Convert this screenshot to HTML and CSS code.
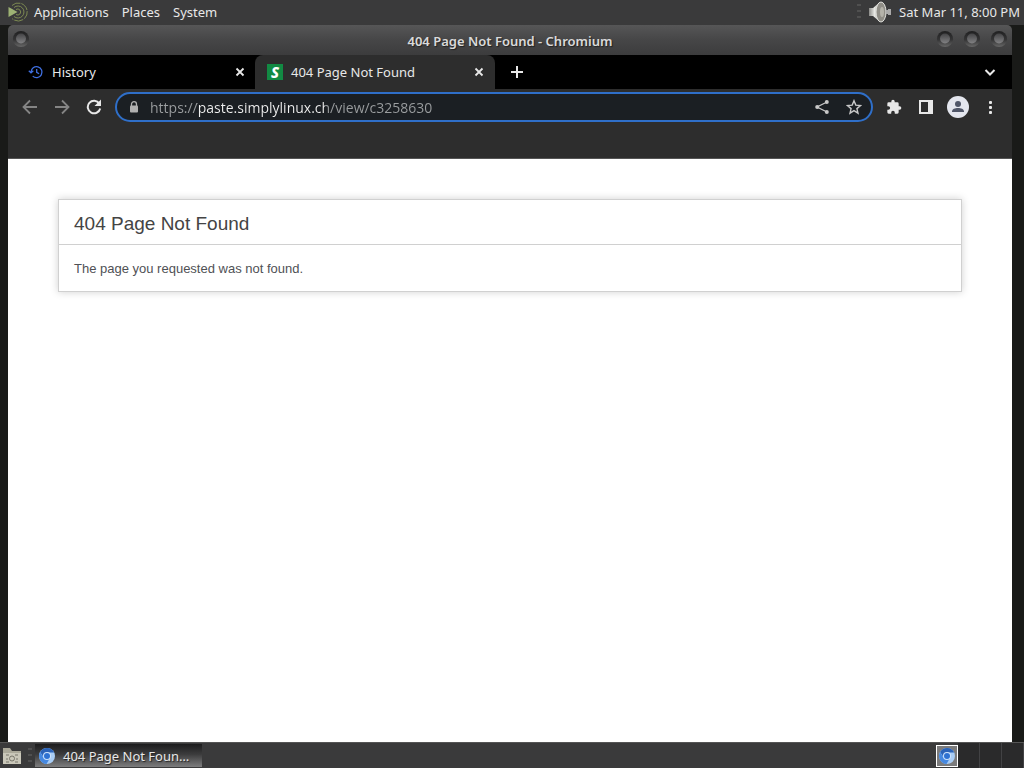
FILE: index.html
```html
<!DOCTYPE html>
<html lang="en">
<head>
    <meta charset="UTF-8">
    <meta name="viewport" content="width=device-width, initial-scale=1.0">
    <title>404 Page Not Found</title>
    <link rel="stylesheet" href="styles.css">
</head>
<body>
    <!-- shared icons -->
    <svg class="defs" width="0" height="0" aria-hidden="true">
        <symbol id="close" viewBox="0 0 10 10">
            <path d="M1.500 1.500l7 7M8.500 1.500l-7 7" fill="none" stroke="currentColor" stroke-width="1.800"/>
        </symbol>
        <symbol id="chromium" viewBox="0 0 18 18">
            <circle cx="9" cy="9" r="8" fill="#a9cdf5"/>
            <path d="M2.100 5A8 8 0 0 1 16.200 5.400H9L6 11z" fill="#2b63b8"/>
            <path d="M2.100 5A8 8 0 0 0 8.500 17l3.500-6-7-1z" fill="#4688e0"/>
            <circle cx="9" cy="9" r="4" fill="#cfe3fb"/>
            <circle cx="9" cy="9" r="3" fill="#2f72d2"/>
        </symbol>
        <symbol id="knob" viewBox="0 0 20 20">
            <circle cx="10" cy="10" r="9" fill="url(#rim)"/>
            <circle cx="10" cy="9.500" r="5.500" fill="url(#ball)"/>
        </symbol>
        <defs>
            <linearGradient id="rim" x1="0" y1="0" x2="0" y2="1">
                <stop offset="0" stop-color="#1f1f20"/>
                <stop offset=".55" stop-color="#353536"/>
                <stop offset="1" stop-color="#686868"/>
            </linearGradient>
            <linearGradient id="ball" x1="0" y1="0" x2="0" y2="1">
                <stop offset="0" stop-color="#444446"/>
                <stop offset="1" stop-color="#828284"/>
            </linearGradient>
            <linearGradient id="metal" x1="0" y1="0" x2="1" y2="0">
                <stop offset="0" stop-color="#8b8b88"/>
                <stop offset=".5" stop-color="#e8e8e4"/>
                <stop offset="1" stop-color="#9a9a96"/>
            </linearGradient>
        </defs>
    </svg>

    <header class="panel">
        <svg class="menu-logo" viewBox="0 0 20 20" aria-hidden="true">
            <g fill="none" stroke="#7d8a52" stroke-width="1">
                <path d="M4 3.500A9 9 0 1 1 4 16.500" stroke-dasharray="9 1"/>
                <path d="M6 5.500a6 6 0 1 1 0 9"/>
                <path d="M8 7.500a3 3 0 1 1 0 5"/>
            </g>
            <path d="M0.500 5v10l9-5z" fill="#9db274"/>
        </svg>
        <nav class="panel-menu">
            <button>Applications</button>
            <button>Places</button>
            <button>System</button>
        </nav>
        <div class="panel-tray">
            <span class="grip"></span>
            <svg class="volume" viewBox="0 0 24 22" aria-hidden="true">
                <path d="M1 7h4l7-6v20l-7-6H1z" fill="url(#metal)"/>
                <ellipse cx="13" cy="11" rx="5" ry="10" fill="#8f8d86" stroke="#e2e2de"/>
                <ellipse cx="14" cy="11" rx="2" ry="5" fill="#b5b3aa"/>
                <path d="M18 9h2v4h-2zM20 8h3v6h-3z" fill="#aaa"/>
            </svg>
            <time>Sat Mar 11, 8:00 PM</time>
        </div>
    </header>

    <main class="window">
        <div class="titlebar">
            <button class="knob" aria-label="Window menu"><svg><use href="#knob"/></svg></button>
            <span class="title">404 Page Not Found - Chromium</span>
            <div class="window-buttons">
                <button class="knob" aria-label="Minimize"><svg><use href="#knob"/></svg></button>
                <button class="knob" aria-label="Maximize"><svg><use href="#knob"/></svg></button>
                <button class="knob" aria-label="Close window"><svg><use href="#knob"/></svg></button>
            </div>
        </div>

        <div class="tabs">
            <div class="tab">
                <svg class="favicon" viewBox="0 0 16 16" fill="none" stroke="#3f6fe0" stroke-width="1.300" aria-hidden="true">
                    <path d="M3 8a5.500 5.500 0 1 1 1.700 4.100M0.800 6.800L3 8.900l2.300-2.100M8.700 5V8.300l2.400 1.500"/>
                </svg>
                <span>History</span>
                <button class="tab-close" aria-label="Close tab"><svg><use href="#close"/></svg></button>
            </div>
            <div class="tab active">
                <span class="favicon site">S</span>
                <span>404 Page Not Found</span>
                <button class="tab-close" aria-label="Close tab"><svg><use href="#close"/></svg></button>
            </div>
            <button class="new-tab" aria-label="New tab">
                <svg viewBox="0 0 12 12"><path d="M6 0v12M0 6h12" stroke="currentColor" stroke-width="2"/></svg>
            </button>
            <button class="tab-search" aria-label="Search tabs">
                <svg viewBox="0 0 12 12"><path d="M1.500 4L6 8.500 10.500 4" fill="none" stroke="currentColor" stroke-width="2"/></svg>
            </button>
        </div>

        <div class="toolbar">
            <button class="tool dim" aria-label="Back">
                <svg viewBox="0 0 16 16" fill="none" stroke="currentColor" stroke-width="1.800"><path d="M15 8H2M8 1.500L1.500 8 8 14.500"/></svg>
            </button>
            <button class="tool dim" aria-label="Forward">
                <svg viewBox="0 0 16 16" fill="none" stroke="currentColor" stroke-width="1.800"><path d="M1 8h13M8 1.500L14.500 8 8 14.500"/></svg>
            </button>
            <button class="tool" aria-label="Reload">
                <svg viewBox="0 0 16 16"><path d="M13.300 4.500A6.300 6.300 0 1 0 14.200 9.500" fill="none" stroke="currentColor" stroke-width="2"/><path d="M15 0.500V7H8.500z" fill="currentColor"/></svg>
            </button>
            <div class="omnibox">
                <svg class="lock" viewBox="0 0 10 12" aria-hidden="true"><path d="M2.500 5V3.200a2.500 2.500 0 0 1 5 0V5" fill="none" stroke="currentColor" stroke-width="1.300"/><rect x="1" y="4.500" width="8" height="7" rx="1" fill="currentColor"/></svg>
                <input class="url" type="text" aria-label="Address" value="https://paste.simplylinux.ch/view/c3258630">
                <button class="tool" aria-label="Share">
                    <svg viewBox="0 0 16 16"><path d="M13 3L3 8l10 5" fill="none" stroke="currentColor" stroke-width="1.300"/><g fill="currentColor"><circle cx="12.800" cy="3" r="2"/><circle cx="3.200" cy="8" r="2"/><circle cx="12.800" cy="13" r="2"/></g></svg>
                </button>
                <button class="tool" aria-label="Bookmark">
                    <svg viewBox="0 0 16 16"><path d="M8 1.700l1.800 4.400 4.700.4-3.600 3.100 1.100 4.600L8 11.700l-4 2.500 1.100-4.600L1.500 6.500l4.700-.4z" fill="none" stroke="currentColor" stroke-width="1.400"/></svg>
                </button>
            </div>
            <button class="tool" aria-label="Extensions">
                <svg viewBox="0 0 24 24"><path d="M20.500 11H19V7a2 2 0 0 0-2-2h-4V3.500a2.500 2.500 0 0 0-5 0V5H4a2 2 0 0 0-2 2v3.800h1.500a2.700 2.700 0 0 1 0 5.400H2V20a2 2 0 0 0 2 2h3.800v-1.500a2.700 2.700 0 0 1 5.400 0V22H17a2 2 0 0 0 2-2v-4h1.500a2.500 2.500 0 0 0 0-5z" fill="currentColor"/></svg>
            </button>
            <button class="tool" aria-label="Side panel">
                <svg viewBox="0 0 16 16"><path d="M1 1h14v14H1zM3 3v10h7V3z" fill="currentColor" fill-rule="evenodd"/></svg>
            </button>
            <button class="tool avatar" aria-label="Profile">
                <svg viewBox="0 0 22 22"><circle cx="11" cy="11" r="11" fill="#e4e6ee"/><circle cx="11" cy="8" r="3" fill="#505668"/><path d="M5 15.500c0-2.500 3-3.500 6-3.500s6 1 6 3.500V16H5z" fill="#505668"/></svg>
            </button>
            <button class="tool" aria-label="More">
                <svg viewBox="0 0 16 16" fill="currentColor"><rect x="7" y="2" width="3" height="3" rx="1"/><rect x="7" y="7" width="3" height="3" rx="1"/><rect x="7" y="12" width="3" height="3" rx="1"/></svg>
            </button>
        </div>
        <div class="bookmarks"></div>

        <div class="page">
            <section class="message">
                <h1>404 Page Not Found</h1>
                <p>The page you requested was not found.</p>
            </section>
        </div>
    </main>

    <footer class="taskbar">
        <button class="files" aria-label="Show desktop">
            <svg viewBox="0 0 20 18"><path d="M1 17V1h7l2 3h9v13z" fill="#aaa899"/><path d="M1 17V6h18v11z" fill="#c9c7b9"/><path d="M4 8h3M13 8h3M4 12h2M14 12h2M4 15h3M13 15h3" stroke="#77756a"/><circle cx="10" cy="11.500" r="2.500" fill="none" stroke="#77756a"/></svg>
        </button>
        <span class="grip"></span>
        <button class="task">
            <svg><use href="#chromium"/></svg>
            <span>404 Page Not Foun…</span>
        </button>
        <div class="workspaces">
            <button class="workspace current" aria-label="Workspace 1"><svg><use href="#chromium"/></svg></button>
            <button class="workspace" aria-label="Workspace 2"></button>
            <button class="workspace" aria-label="Workspace 3"></button>
            <button class="workspace" aria-label="Workspace 4"></button>
        </div>
    </footer>
</body>
</html>
```
FILE: styles.css
```css
* {
    box-sizing: border-box;
}
body {
    margin: 0;
    height: 100vh;
    display: flex;
    flex-direction: column;
    background-color: #191a18;
    color: #e8e8e8;
    font-family: "Noto Sans", sans-serif;
    font-size: 13px;
    overflow: hidden;
}
button {
    display: flex;
    align-items: center;
    justify-content: center;
    flex: none;
    padding: 0;
    border: none;
    background: none;
    color: inherit;
    font: inherit;
}
svg {
    display: block;
    flex: none;
}
.defs {
    position: absolute;
}

/* top panel */
.panel {
    display: flex;
    align-items: center;
    height: 25px;
    padding: 0 4px 1px 8px;
    background-color: #3a3a3b;
}
.menu-logo {
    width: 20px;
    height: 20px;
}
.panel-menu {
    display: flex;
    gap: 13px;
    margin-left: 6px;
}
.panel-tray {
    display: flex;
    align-items: center;
    margin-left: auto;
}
.grip {
    width: 4px;
    height: 16px;
    background: repeating-linear-gradient(#505050 0 2px, transparent 2px 6px);
}
.volume {
    width: 24px;
    height: 22px;
    margin: 0 7px;
}

/* window frame */
.window {
    flex: 1;
    min-height: 0;
    display: flex;
    flex-direction: column;
    margin: 0 12px 0 8px;
}
.titlebar {
    display: grid;
    grid-template-columns: 1fr auto 1fr;
    align-items: center;
    height: 30px;
    padding: 0 4px;
    border-radius: 5px 5px 0 0;
    background: linear-gradient(#565657, #464647 50%, #3c3c3d);
}
.title {
    padding-top: 2px;
    font-weight: 600;
    color: #dadada;
    text-shadow: 1px 1px 1px #222;
}
.window-buttons {
    display: flex;
    justify-content: flex-end;
    gap: 9px;
}
.knob {
    justify-self: start;
}
.knob svg {
    width: 18px;
    height: 18px;
    margin-bottom: 2px;
}

/* tabs */
.tabs {
    display: flex;
    align-items: center;
    height: 34px;
    background-color: #000;
}
.tab {
    display: flex;
    align-items: center;
    gap: 8px;
    width: 247px;
    height: 34px;
    padding: 0 8px 0 20px;
}
.tab.active {
    width: 240px;
    padding: 0 9px 0 12px;
    border-radius: 8px 8px 0 0;
    background-color: #2d2d2d;
}
.favicon {
    width: 16px;
    height: 16px;
}
.favicon.site {
    background-color: #128a43;
    color: #fff;
    font-size: 15px;
    font-weight: 800;
    font-style: italic;
    line-height: 16px;
    text-align: center;
}
.tab-close {
    width: 14px;
    height: 14px;
    margin-left: auto;
}
.tab-close svg {
    width: 10px;
    height: 10px;
}
.new-tab {
    width: 28px;
    height: 28px;
    margin-left: 8px;
}
.tab-search {
    width: 28px;
    height: 28px;
    margin: 0 8px 0 auto;
}
.new-tab svg,
.tab-search svg {
    width: 12px;
    height: 12px;
}

/* toolbar */
.toolbar {
    display: flex;
    align-items: center;
    gap: 8px;
    height: 36px;
    padding: 0 10px;
    background-color: #2d2d2d;
}
.tool {
    width: 24px;
    height: 24px;
}
.tool svg {
    width: 16px;
    height: 16px;
}
.tool.avatar svg {
    width: 22px;
    height: 22px;
}
.dim {
    color: #858585;
}
.omnibox {
    flex: 1;
    display: flex;
    align-items: center;
    gap: 8px;
    height: 30px;
    padding: 0 5px 0 12px;
    border: 2px solid #2f6fc9;
    border-radius: 15px;
    margin: 0 1px;
    background-color: #1b1f23;
    color: #c8c8c8;
}
.lock {
    width: 10px;
    height: 12px;
    color: #b0b0b0;
}
/* the host is brighter than the scheme and the path */
.url {
    flex: 1;
    min-width: 0;
    height: 24px;
    padding: 0;
    margin-left: 3px;
    border: none;
    outline: none;
    background: linear-gradient(90deg, #9b9ea0 47px, #f0f0f0 47px 175px, #9b9ea0 175px);
    background-clip: text;
    -webkit-background-clip: text;
    color: transparent;
    font-family: "Open Sans", "Noto Sans", sans-serif;
    font-size: 14px;
}
.bookmarks {
    height: 34px;
    border-bottom: 1px solid #555;
    background-color: #2d2d2d;
}

/* page content */
.page {
    flex: 1;
    padding: 40px 50px;
    background-color: #fff;
    color: #4f5155;
    font-family: "Liberation Sans", Arial, sans-serif;
    line-height: 20px;
}
.message {
    border: 1px solid #d0d0d0;
    box-shadow: 0 0 8px #d0d0d0;
}
.message h1 {
    margin: 0 0 14px;
    padding: 14px 15px 10px;
    border-bottom: 1px solid #d0d0d0;
    color: #444;
    font-size: 19px;
    font-weight: normal;
}
.message p {
    margin: 12px 15px;
}

/* bottom panel */
.taskbar {
    display: flex;
    align-items: center;
    height: 26px;
    padding: 0 0 0 2px;
    border-top: 1px solid #555;
    background-color: #3a3a3b;
}
.files svg {
    width: 20px;
    height: 18px;
}
.taskbar .grip {
    margin: 0 3px 0 6px;
}
.task {
    gap: 7px;
    width: 167px;
    height: 23px;
    justify-content: flex-start;
    padding: 0 3px;
    background: linear-gradient(#1c1c1d, #3c3c3d 45%, #7d7d7e);
    text-shadow: 1px 1px 1px #222;
}
.task svg,
.workspace svg {
    width: 18px;
    height: 18px;
}
.workspaces {
    display: flex;
    align-items: center;
    margin-left: auto;
}
.workspace {
    width: 22px;
    height: 25px;
    border-right: 1px solid #424244;
    background-color: #2a2a2b;
}
.workspace.current {
    height: 22px;
    border: 1px solid #fff;
    background-color: #7b7b7c;
}
```
